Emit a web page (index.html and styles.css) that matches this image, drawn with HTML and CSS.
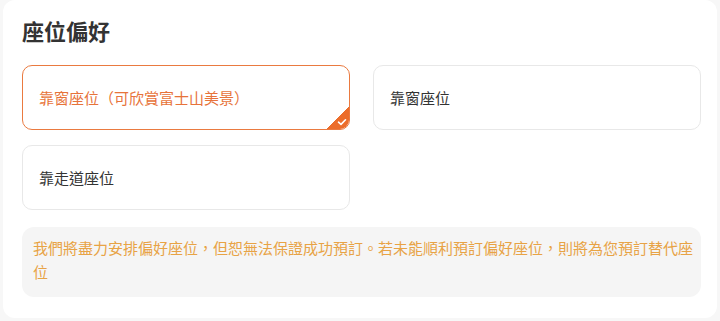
FILE: index.html
```html
<!DOCTYPE html>
<html lang="zh-Hant">

<head>
	<meta charset="UTF-8">
	<meta name="viewport" content="width=device-width, initial-scale=1.0">
	<title>座位偏好</title>
	<link rel="stylesheet" href="styles.css">
</head>

<body>
	<div class="panel">
		<h2 class="title">座位偏好</h2>
		<div class="options">
			<div class="option active">
				靠窗座位（可欣賞富士山美景）
				<span class="tick">
					<svg width="10" height="8" viewBox="0 0 10 8">
						<path d="M1.5 4.2 L4 6.4 L8.5 1.8" fill="none" stroke="#fff" stroke-width="1.6" stroke-linecap="round" stroke-linejoin="round" />
					</svg>
				</span>
			</div>
			<div class="option">靠窗座位</div>
			<div class="option">靠走道座位</div>
		</div>
		<div class="note">我們將盡力安排偏好座位，但恕無法保證成功預訂。若未能順利預訂偏好座位，則將為您預訂替代座位</div>
	</div>
</body>

</html>
```

FILE: styles.css
```css
* {
	margin: 0;
	padding: 0;
	box-sizing: border-box;
}

body {
	background-color: #f7f7f7;
	font-family: "Noto Sans CJK TC", "Noto Sans", sans-serif;
	color: #333;
}

.panel {
	margin: 0 3px;
	height: 318px;
	padding: 15px 16px 21px 19px;
	background-color: #fff;
	border-radius: 12px;
}

.title {
	font-size: 22px;
	line-height: 30px;
	font-weight: 700;
	color: #333;
	margin-bottom: 20px;
}

.options {
	display: grid;
	grid-template-columns: 1fr 1fr;
	column-gap: 23px;
	row-gap: 15px;
}

.option {
	position: relative;
	overflow: hidden;
	height: 65px;
	display: flex;
	align-items: center;
	padding: 0 16px;
	border: 1px solid #e8e8e8;
	border-radius: 10px;
	font-size: 15px;
	color: #333;
}

.option.active {
	border-color: #ea7a40;
	color: #e7733a;
}

.tick {
	position: absolute;
	right: 0;
	bottom: 0;
	width: 22px;
	height: 22px;
	background: linear-gradient(135deg, transparent 50%, #ec6d2b 50%);
}

.tick svg {
	position: absolute;
	right: 2px;
	bottom: 3px;
}

.note {
	margin-top: 17px;
	padding: 9px 6px 13px 11px;
	background-color: #f5f5f5;
	border-radius: 12px;
	font-size: 15px;
	line-height: 24px;
	color: #e8a345;
}
```
